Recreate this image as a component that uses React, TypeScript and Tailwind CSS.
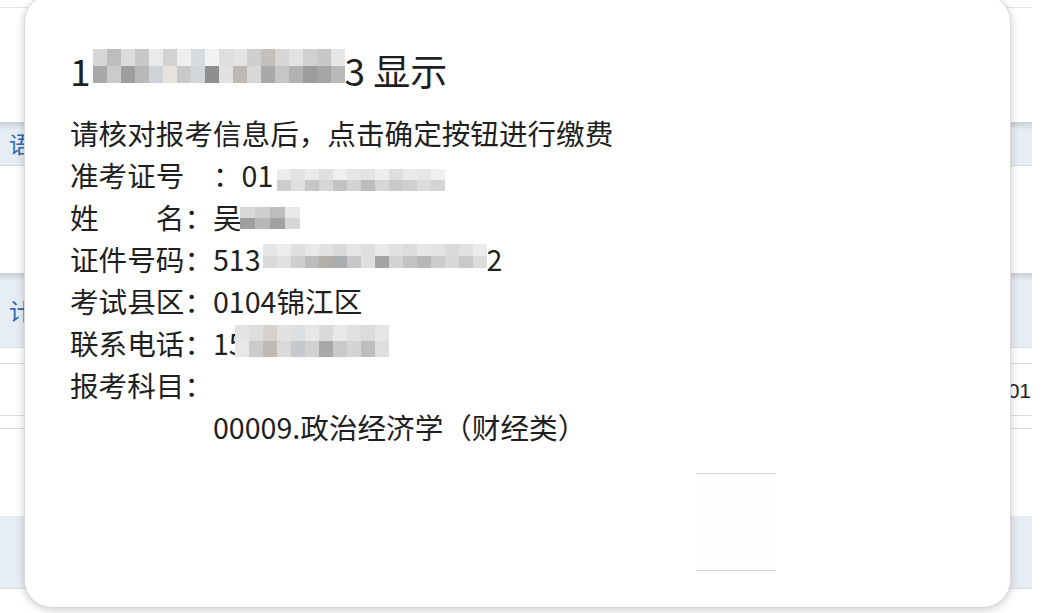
import React from "react";

const titleMosaic = [
  ["bg-[#d6d6d6]", "bg-[#bdbdbd]", "bg-[#dcdcdc]", "bg-[#c8c8c8]", "bg-[#e9eaec]", "bg-[#d2d2d2]", "bg-[#eeeeee]", "bg-[#d9dcdf]", "bg-[#f2f2f2]", "bg-[#dedede]", "bg-[#e4e4e4]", "bg-[#cfcfcf]", "bg-[#c4c0bb]", "bg-[#d6d6d6]", "bg-[#e2e2e2]", "bg-[#d0d0d0]", "bg-[#c8c8c8]", "bg-[#e6e6e6]"],
  ["bg-[#a8a8a8]", "bg-[#cbcbcb]", "bg-[#9e9e9e]", "bg-[#b8b8b8]", "bg-[#cfd3d7]", "bg-[#e6e3df]", "bg-[#c9c9c9]", "bg-[#d3d6da]", "bg-[#8f8f8f]", "bg-[#e2e2e2]", "bg-[#bdb8b2]", "bg-[#d8d8d8]", "bg-[#a9a9a9]", "bg-[#c6c6c6]", "bg-[#b2b2b2]", "bg-[#9c9c9c]", "bg-[#a6a6a6]", "bg-[#b9b9b9]"],
];

const idMosaic = [
  ["bg-[#ececec]", "bg-[#e2e2e2]", "bg-[#eaeaea]", "bg-[#e0e0e0]", "bg-[#efefef]", "bg-[#e6e6e6]", "bg-[#e3e3e3]", "bg-[#eeeeee]", "bg-[#dedede]", "bg-[#eaeaea]", "bg-[#e6e6e6]", "bg-[#f0f0f0]"],
  ["bg-[#cdcdcd]", "bg-[#dfdfdf]", "bg-[#c6c6c6]", "bg-[#d6d6d6]", "bg-[#c3c3c3]", "bg-[#d3d3d3]", "bg-[#bdbdbd]", "bg-[#d7d7d7]", "bg-[#cacaca]", "bg-[#d0d0d0]", "bg-[#dcdcdc]", "bg-[#d5d5d5]"],
];

const nameMosaic = [
  ["bg-[#d8d8d8]", "bg-[#cfcfcf]", "bg-[#bdbdbd]", "bg-[#e9e9e9]"],
  ["bg-[#9f9f9f]", "bg-[#b9b9b9]", "bg-[#a2a2a2]", "bg-[#d6d6d6]"],
];

const certMosaic = [
  ["bg-[#e6e6e6]", "bg-[#ececec]", "bg-[#dfdfdf]", "bg-[#e8e8e8]", "bg-[#e2e2e2]", "bg-[#d9d9d9]", "bg-[#e5e5e5]", "bg-[#dedede]", "bg-[#e9e9e9]", "bg-[#e1e1e1]", "bg-[#dcdcdc]", "bg-[#e7e7e7]", "bg-[#e3e3e3]", "bg-[#dadada]", "bg-[#e0e0e0]", "bg-[#ebebeb]"],
  ["bg-[#dadada]", "bg-[#e0e0e0]", "bg-[#cfcfcf]", "bg-[#bcbcbc]", "bg-[#b3aea8]", "bg-[#a9acb0]", "bg-[#c7c7c7]", "bg-[#dedede]", "bg-[#a4a4a4]", "bg-[#d2d2d2]", "bg-[#c3c3c3]", "bg-[#b7b7b7]", "bg-[#cccccc]", "bg-[#d8d8d8]", "bg-[#c9c9c9]", "bg-[#dcdcdc]"],
];

const phoneMosaic = [
  ["bg-[#e4e4e4]", "bg-[#dedede]", "bg-[#d6d2ce]", "bg-[#e2e2e2]", "bg-[#dcdfe2]", "bg-[#e6e6e6]", "bg-[#dadada]", "bg-[#e8e8e8]", "bg-[#e0e0e0]", "bg-[#dcdcdc]", "bg-[#e5e5e5]"],
  ["bg-[#e8e8e8]", "bg-[#cbcbcb]", "bg-[#bfbab4]", "bg-[#d9d9d9]", "bg-[#c5c8cc]", "bg-[#d1d1d1]", "bg-[#a8a8a8]", "bg-[#c9c9c9]", "bg-[#d4d4d4]", "bg-[#bdbdbd]", "bg-[#dedede]"],
];

function Mosaic({ grid, cell, rowH, cls }: { grid: string[][]; cell: string; rowH: string; cls: string }) {
  return (
    <span className={"inline-flex flex-col shrink-0 " + cls}>
      {grid.map((row, i) => (
        <span key={i} className={"flex " + rowH}>
          {row.map((c, j) => (
            <span key={j} className={c + " " + cell + " h-full"} />
          ))}
        </span>
      ))}
    </span>
  );
}

function Band({ text }: { text: string }) {
  return (
    <div className="relative w-full h-full bg-[#e7edf4] border-b border-[#d3dbe4] flex items-center">
      <div className="absolute top-0 left-0 right-0 h-[8px] bg-gradient-to-b from-[#c9cfd5] to-[#e7edf4]" />
      <span className="relative pl-[9px] text-[23px] text-[#2b6cb0] font-['Noto_Sans_CJK_SC',sans-serif]">{text}</span>
    </div>
  );
}

export default function App() {
  return (
    <div className="relative w-[1043px] h-[613px] overflow-hidden bg-white">
      {/* background page */}
      <div className="w-[1032px] flex flex-col">
        <div className="h-[8px] border-b border-[#e3e3e3]" />
        <div className="h-[114px]" />
        <div className="h-[44px]"><Band text="语" /></div>
        <div className="h-[107px]" />
        <div className="h-[75px]"><Band text="计" /></div>
        <div className="h-[16px] border-b border-[#dcdcdc]" />
        <div className="h-[52px] border-b border-[#dcdcdc] flex items-center justify-end pr-[1px] pt-[3px] text-[21px] text-[#222] font-['Liberation_Sans',sans-serif]">2001</div>
        <div className="h-[13px] border-b border-[#dcdcdc]" />
        <div className="h-[87px]" />
        <div className="h-[73px] bg-[#e7edf4] border-b border-[#d3dbe4]" />
      </div>

      {/* alert dialog */}
      <div className="absolute left-[24px] top-[-6px] w-[987px] h-[614px] bg-white rounded-[28px] border border-[#d9d9d9] shadow-[0_2px_8px_rgba(0,0,0,0.2)] flex flex-col pl-[45px] pt-[55px] text-[#1f1f1f] font-['Noto_Sans_CJK_SC',sans-serif]">
        <div className="flex items-center h-[40px] text-[37px] leading-[40px] whitespace-pre">
          <span>1</span>
          <Mosaic grid={titleMosaic} cell="w-[14px]" rowH="h-[17px]" cls="ml-[2px] -translate-y-[4px]" />
          <span>3 显示</span>
        </div>
        <div className="mt-[22px] flex flex-col text-[28.6px] leading-[42px] whitespace-pre">
          <div>请核对报考信息后，点击确定按钮进行缴费</div>
          <div className="flex items-center">
            <span>准考证号　：01</span>
            <Mosaic grid={idMosaic} cell="w-[14px]" rowH="h-[11px]" cls="ml-[4px] translate-y-[5px]" />
          </div>
          <div className="flex items-center">
            <span>姓　　名：吴</span>
            <Mosaic grid={nameMosaic} cell="w-[15px]" rowH="h-[11px]" cls="-ml-[2px] translate-y-[1px]" />
          </div>
          <div className="flex items-center">
            <span>证件号码：513</span>
            <Mosaic grid={certMosaic} cell="w-[14px]" rowH="h-[12px]" cls="ml-[2px] -translate-y-[3px]" />
            <span>2</span>
          </div>
          <div>考试县区：0104锦江区</div>
          <div className="flex items-center">
            <span>联系电话：15</span>
            <Mosaic grid={phoneMosaic} cell="w-[14px]" rowH="h-[16px]" cls="-ml-[10px] -translate-y-[2px]" />
          </div>
          <div>报考科目：</div>
          <div className="pl-[143px]">00009.政治经济学（财经类）</div>
        </div>
        <div className="mt-[25px] flex justify-end pr-[234px]">
          <div className="w-[80px] h-[98px] border-t border-b border-[#cfd5e8] bg-[#fdfdfe]" />
        </div>
      </div>
    </div>
  );
}
